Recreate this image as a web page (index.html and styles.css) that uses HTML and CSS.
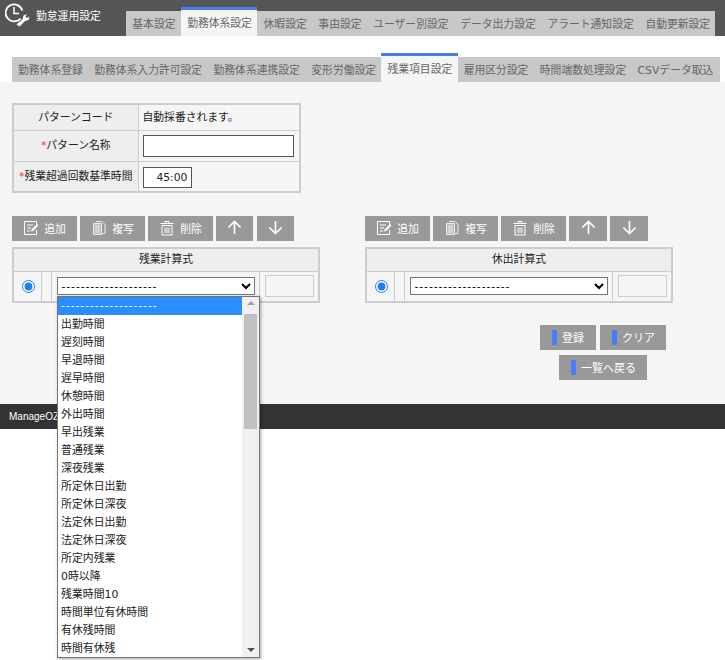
FILE: index.html
```html
<!DOCTYPE html>
<html lang="ja">
<head>
<meta charset="utf-8">
<title>勤怠運用設定</title>
<link rel="stylesheet" href="styles.css">
</head>
<body>
<header class="topbar">
  <div class="brand">
    <svg class="brand-icon" width="26" height="24" viewBox="0 0 26 24" fill="none" stroke="#fff">
      <path d="M15.500 15.500A8.500 8.500 0 1 1 17.300 7.500" stroke-width="1.800"/>
      <path d="M9 4v6.500h5" stroke-width="1.500"/>
      <path d="M11.500 21.500l6-5.500 1-3.500 3.500-1.500-1.500 2.500 1.500 1.500 2.500-1.500-1 3.500-3.500 1-5.500 5.500z" fill="#fff" stroke="none"/>
    </svg>
    <span class="brand-name">勤怠運用設定</span>
  </div>
  <nav class="tabs">
    <a class="tab">基本設定</a>
    <a class="tab active">勤務体系設定</a>
    <a class="tab">休暇設定</a>
    <a class="tab">事由設定</a>
    <a class="tab">ユーザー別設定</a>
    <a class="tab">データ出力設定</a>
    <a class="tab">アラート通知設定</a>
    <a class="tab">自動更新設定</a>
  </nav>
</header>
<nav class="subtabs">
  <a class="subtab">勤務体系登録</a>
  <a class="subtab">勤務体系入力許可設定</a>
  <a class="subtab">勤務体系連携設定</a>
  <a class="subtab">変形労働設定</a>
  <a class="subtab active">残業項目設定</a>
  <a class="subtab">雇用区分設定</a>
  <a class="subtab">時間端数処理設定</a>
  <a class="subtab">CSVデータ取込</a>
</nav>
<main class="content">
  <table class="form-table">
    <tr><th>パターンコード</th><td class="plain">自動採番されます。</td></tr>
    <tr><th><span class="req">*</span>パターン名称</th><td><input class="name-input" type="text"></td></tr>
    <tr><th><span class="req">*</span>残業超過回数基準時間</th><td><input class="time-input" type="text" value="45:00"></td></tr>
  </table>

  <div class="formulas">
    <section class="formula">
      <div class="toolbar narrow">
        <button class="tool"><svg class="ico" viewBox="0 0 16 16"><use href="#i-add"/></svg>追加</button>
        <button class="tool"><svg class="ico" viewBox="0 0 16 16"><use href="#i-copy"/></svg>複写</button>
        <button class="tool"><svg class="ico" viewBox="0 0 16 16"><use href="#i-del"/></svg>削除</button>
        <button class="tool arrow"><svg class="arr" viewBox="0 0 16 16"><use href="#i-up"/></svg></button>
        <button class="tool arrow"><svg class="arr" viewBox="0 0 16 16"><use href="#i-down"/></svg></button>
      </div>
      <table class="calc">
        <colgroup><col class="w-radio"><col class="w-blank"><col class="w-select"><col class="w-box"></colgroup>
        <tr><th colspan="4">残業計算式</th></tr>
        <tr>
          <td class="c-radio"><input type="radio" name="a" checked></td>
          <td></td>
          <td class="c-select"><select class="sel"><option>--------------------</option></select></td>
          <td class="c-box"><div class="box"></div></td>
        </tr>
      </table>
      <div class="dropdown">
        <ul class="options">
          <li class="selected">--------------------</li>
          <li>出勤時間</li><li>遅刻時間</li><li>早退時間</li><li>遅早時間</li>
          <li>休憩時間</li><li>外出時間</li><li>早出残業</li><li>普通残業</li>
          <li>深夜残業</li><li>所定休日出勤</li><li>所定休日深夜</li><li>法定休日出勤</li>
          <li>法定休日深夜</li><li>所定内残業</li><li>0時以降</li><li>残業時間10</li>
          <li>時間単位有休時間</li><li>有休残時間</li><li>時間有休残</li>
        </ul>
        <div class="scrollbar">
          <span class="sb-up"></span>
          <span class="sb-thumb"></span>
          <span class="sb-down"></span>
        </div>
      </div>
    </section>

    <section class="formula">
      <div class="toolbar">
        <button class="tool"><svg class="ico" viewBox="0 0 16 16"><use href="#i-add"/></svg>追加</button>
        <button class="tool"><svg class="ico" viewBox="0 0 16 16"><use href="#i-copy"/></svg>複写</button>
        <button class="tool"><svg class="ico" viewBox="0 0 16 16"><use href="#i-del"/></svg>削除</button>
        <button class="tool arrow"><svg class="arr" viewBox="0 0 16 16"><use href="#i-up"/></svg></button>
        <button class="tool arrow"><svg class="arr" viewBox="0 0 16 16"><use href="#i-down"/></svg></button>
      </div>
      <table class="calc">
        <colgroup><col class="w-radio"><col class="w-blank"><col class="w-select"><col class="w-box"></colgroup>
        <tr><th colspan="4">休出計算式</th></tr>
        <tr>
          <td class="c-radio"><input type="radio" name="b" checked></td>
          <td></td>
          <td class="c-select"><select class="sel"><option>--------------------</option></select></td>
          <td class="c-box"><div class="box"></div></td>
        </tr>
      </table>
      <div class="actions">
        <div class="action-row">
          <button class="act act-s"><i class="mark"></i>登録</button>
          <button class="act act-m"><i class="mark"></i>クリア</button>
        </div>
        <div class="action-row second">
          <button class="act act-l"><i class="mark"></i>一覧へ戻る</button>
        </div>
      </div>
    </section>
  </div>
</main>
<footer class="footer">ManageOZO3</footer>

<svg class="defs" width="0" height="0">
  <defs>
    <g id="i-add" fill="none" stroke="#fff" stroke-width="1">
      <path d="M13.500 5V1.500h-12v13h12V10"/>
      <path d="M4 5h6M4 8h4M4 11h3"/>
      <path d="M8 11.500l.5-2L14 4l1.500 1.500L10 11z" fill="#fff" stroke="none"/>
    </g>
    <g id="i-copy" fill="none" stroke="#eee" stroke-width="1">
      <path d="M5 1.500h6l3 3v9h-3"/>
      <path d="M2.500 3.500h8v11h-8z" fill="#bbb"/>
      <path d="M4 6h5M4 8h5M4 10h5M4 12h5"/>
    </g>
    <g id="i-del" fill="none" stroke="#fff" stroke-width="1">
      <path d="M1.500 3.500h13M6 3.500V1.500h4v2"/>
      <path d="M3 5.500h10v9.500H3z"/>
      <path d="M6 7.500v5.500M10 7.500v5.500M8 7.500v5.500"/>
    </g>
    <g id="i-up" fill="none" stroke="#fff" stroke-width="1.700">
      <path d="M8 15V1.500M1.500 8L8 1.500 14.500 8"/>
    </g>
    <g id="i-down" fill="none" stroke="#fff" stroke-width="1.700">
      <path d="M8 1v13.500M1.500 8L8 14.500 14.500 8"/>
    </g>
  </defs>
</svg>
</body>
</html>
```
FILE: styles.css
```css
* { box-sizing: border-box; }
html, body { margin: 0; padding: 0; background: #fff; }
body {
  width: 725px;
  height: 660px;
  overflow: hidden;
  font-family: "DejaVu Sans", "Noto Sans CJK JP", sans-serif;
  font-size: 10.8px;
  line-height: 1;
  color: #222;
  position: relative;
}
.defs { position: absolute; }

.topbar {
  height: 36px;
  background: #555;
  display: flex;
  align-items: flex-end;
}
.brand {
  width: 126px;
  height: 36px;
  display: flex;
  align-items: flex-start;
  color: #fff;
  flex: none;
}
.brand-icon { margin: 3px 0 0 5px; flex: none; }
.brand-name { margin: 10px 0 0 5px; line-height: 13px; }
.tabs { display: flex; align-items: flex-end; background: #c8c8c8; height: 25px; }
.tab {
  height: 25px;
  padding: 0 5.3px 0 6.34px;
  color: #666;
  line-height: 27px;
  white-space: nowrap;
}
.tab.active {
  height: 29px;
  background: #f5f5f5;
  border-top: 3px solid #4a7cf0;
  line-height: 28px;
}

.subtabs {
  margin: 21px 5px 0 12px;
  height: 25px;
  background: #c8c8c8;
  display: flex;
  align-items: flex-end;
}
.subtab {
  height: 25px;
  padding: 0 5.4px 0 6px;
  line-height: 27px;
  color: #666;
  white-space: nowrap;
}
.subtab.active {
  height: 29px;
  background: #f5f5f5;
  border-top: 3px solid #4a7cf0;
  line-height: 28px;
  margin-top: -4px;
}

.content {
  height: 322px;
  background: #f5f5f5;
  padding: 21px 0 0 12px;
}
.form-table {
  border-collapse: collapse;
  border: 2px solid #ccc;
  width: 289px;
  height: 90px;
  table-layout: fixed;
}
.form-table th {
  width: 125px;
  font-weight: normal;
  background: #eee;
  border: 1px solid #ccc;
  border-width: 1px 1px 1px 0;
  text-align: center;
  padding: 2px 0 0;
  white-space: nowrap;
}
.form-table td { border: 1px solid #ccc; border-right: 0; padding: 0 0 0 4px; }
.form-table .plain { padding-top: 2px; }
.form-table tr:nth-child(1) { height: 26px; }
.form-table tr:nth-child(2) { height: 31px; }
.req { color: #e33; }
.name-input {
  display: block;
  width: 151px;
  height: 22px;
  border: 1px solid #555;
  background: #fff;
}
.time-input {
  display: block;
  width: 49px;
  height: 21px;
  margin-top: 2px;
  border: 1px solid #555;
  background: #fff;
  font: 10.8px "DejaVu Sans", sans-serif;
  text-align: right;
  color: #222;
  padding: 0 3px 0 0;
}

.formulas { display: flex; margin-top: 23px; gap: 45px; }
.formula { width: 308px; position: relative; }
.toolbar { display: flex; gap: 3px; }
.tool {
  width: 65px;
  height: 25px;
  border: 0;
  padding: 0 0 2px;
  background: #999;
  color: #fff;
  font: 10.8px "Noto Sans CJK JP", sans-serif;
  display: flex;
  align-items: center;
  justify-content: center;
  gap: 5px;
}
.tool.arrow { width: 38px; }
.narrow .tool.arrow { width: 37px; }
.narrow .tool.arrow:last-child { margin-left: 1px; }
.tool .ico { width: 16px; height: 16px; }
.tool .arr { width: 15px; height: 15px; }

.calc {
  margin-top: 6px;
  width: 308px;
  height: 56px;
  border-collapse: collapse;
  border: 2px solid #ccc;
  table-layout: fixed;
}
.w-radio { width: 28px; }
.w-blank { width: 10px; }
.w-select { width: 208px; }
.w-box { width: 60px; }
.calc th {
  height: 23px;
  background: #eee;
  font-weight: normal;
  border-bottom: 1px solid #ccc;
  padding: 2px 0 0;
}
.calc td { border-left: 1px solid #ccc; padding: 0; }
.calc td:first-child { border-left: 0; }
.calc input[type="radio"] { width: 13px; height: 13px; accent-color: #1e7ff0; display: block; margin: 0 0 0 8px; }
.calc .c-select { padding: 0 5px; }
.calc .c-box { padding: 0 5px; }
.sel {
  display: block;
  width: 198px;
  height: 18px;
  font: 10.8px "DejaVu Sans", "Noto Sans CJK JP", sans-serif;
  letter-spacing: 0.9px;
  color: #000;
  background-color: #fff;
  border: 1px solid #767676;
  border-radius: 0;
}
.box { width: 49px; height: 22px; border: 1px solid #ccc; }

.dropdown {
  position: absolute;
  left: 45px;
  top: 80px;
  width: 203px;
  height: 362px;
  background: #fff;
  border: 1px solid #767676;
  box-shadow: 1px 1px 3px rgba(0,0,0,.35);
  display: flex;
  z-index: 5;
}
.options { list-style: none; margin: 0; padding: 0; flex: 1; overflow: hidden; font-size: 10.9px; }
.options li {
  height: 18px;
  line-height: 20px;
  padding-left: 3px;
  color: #222;
  white-space: nowrap;
}
.options li.selected { background: #2a8ffc; color: #fff; letter-spacing: 0.9px; line-height: 18px; }
.scrollbar {
  width: 17px;
  background: #f0f0f0;
  position: relative;
  flex: none;
}
.sb-thumb { position: absolute; left: 2px; top: 17px; width: 13px; height: 115px; background: #c0c0c0; }
.sb-up, .sb-down { position: absolute; left: 5px; width: 0; height: 0; border: 4px solid transparent; }
.sb-up { top: 4px; border-top: 0; border-bottom: 4px solid #a3a3a3; }
.sb-down { bottom: 5px; border-bottom: 0; border-top: 4px solid #505050; }

.actions { margin-top: 22px; }
.action-row { display: flex; gap: 4px; padding-left: 175px; }
.action-row.second { margin-top: 5px; padding-left: 194px; }
.act {
  height: 25px;
  padding: 0 0 1px 12px;
  border: 0;
  background: #999;
  color: #fff;
  font: 11px "Noto Sans CJK JP", sans-serif;
  display: flex;
  align-items: center;
  gap: 5px;
}
.act-s { width: 56px; }
.act-m { width: 66px; }
.act-l { width: 88px; }
.mark { width: 5px; height: 15px; background: #4a7cf8; display: block; }

.footer {
  height: 25px;
  background: #333;
  color: #fff;
  font-family: "Liberation Sans", sans-serif;
  font-size: 10px;
  line-height: 25px;
  padding-left: 9px;
}
```
